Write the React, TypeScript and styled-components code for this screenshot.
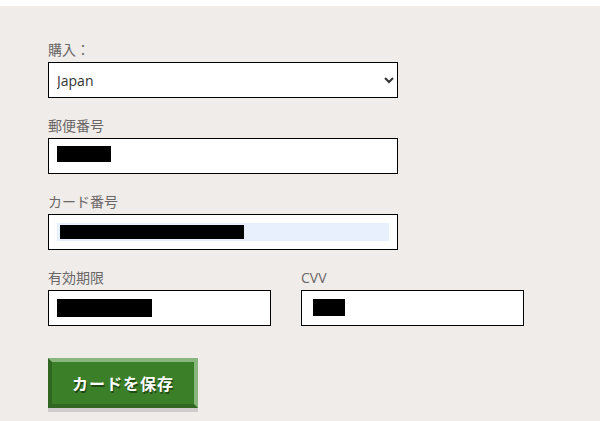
import styled, { createGlobalStyle } from 'styled-components';

const GlobalStyle = createGlobalStyle`
  html, body {
    margin: 0;
    padding: 0;
    background: #fff;
  }
  body {
    font-family: 'Open Sans', 'Noto Sans CJK JP', sans-serif;
  }
`;

const App = () => {
  return (
    <>
      <GlobalStyle />
      <Page>
        <Form>
          <Group>
            <Label>購入：</Label>
            <Select defaultValue="Japan">
              <option>Japan</option>
            </Select>
          </Group>
          <Group>
            <Label>郵便番号</Label>
            <Field>
              <Mask $w={54} $h={16} $shift={-2} />
            </Field>
          </Group>
          <Group>
            <Label>カード番号</Label>
            <Field>
              <Autofill>
                <Mask $w={184} $h={14} $left={3} />
              </Autofill>
            </Field>
          </Group>
          <Row>
            <Group>
              <Label>有効期限</Label>
              <Field>
                <Mask $w={95} $h={18} />
              </Field>
            </Group>
            <Group>
              <Label>CVV</Label>
              <Field>
                <Mask $w={32} $h={17} $left={3} $shift={-1} />
              </Field>
            </Group>
          </Row>
          <SaveButton type="button">カードを保存</SaveButton>
        </Form>
      </Page>
    </>
  );
};

const Page = styled.div`
  margin-top: 6px;
  width: 600px;
  min-height: 415px;
  background: #f0ecea;
`;

const Form = styled.div`
  display: flex;
  flex-direction: column;
  align-items: flex-start;
  padding: 36px 0 0 48px;
`;

const Group = styled.div`
  display: flex;
  flex-direction: column;
  gap: 4px;
  width: 350px;
  margin-bottom: 20px;
`;

const Row = styled.div`
  display: flex;
  gap: 30px;
  ${Group} {
    width: 223px;
  }
`;

const Label = styled.label`
  font-size: 14px;
  line-height: 16px;
  color: #6a6766;
`;

const Select = styled.select`
  box-sizing: border-box;
  width: 100%;
  height: 36px;
  margin: 0;
  padding: 0 4px;
  border: 1px solid #000;
  border-radius: 0;
  background: #fff;
  font-family: 'Open Sans', 'Noto Sans CJK JP', sans-serif;
  font-size: 14px;
  color: #333;
  outline: none;
`;

const Field = styled.div`
  box-sizing: border-box;
  display: flex;
  align-items: center;
  height: 36px;
  padding: 0 8px;
  border: 1px solid #000;
  background: #fff;
`;

const Autofill = styled.div`
  display: flex;
  align-items: center;
  flex: 1;
  height: 18px;
  background: #e8f0fe;
`;

const Mask = styled.span<{ $w: number; $h: number; $left?: number; $shift?: number }>`
  display: block;
  width: ${(p) => p.$w}px;
  height: ${(p) => p.$h}px;
  margin-left: ${(p) => p.$left ?? 0}px;
  transform: translateY(${(p) => p.$shift ?? 0}px);
  background: #000;
`;

const SaveButton = styled.button`
  box-sizing: border-box;
  width: 150px;
  height: 50px;
  margin-top: 12px;
  padding: 0;
  border-style: solid;
  border-width: 4px;
  border-color: #89b67d #89b67d #2e6622 #2e6622;
  background: #3b7f28;
  box-shadow: 0 4px 0 #d0cccb;
  color: #fff;
  font-family: 'Noto Sans CJK JP', sans-serif;
  font-size: 16px;
  font-weight: 700;
  letter-spacing: 1px;
  text-shadow: 1px 2px 0 rgba(20, 50, 10, 0.7);
  cursor: pointer;
`;

export default App;
